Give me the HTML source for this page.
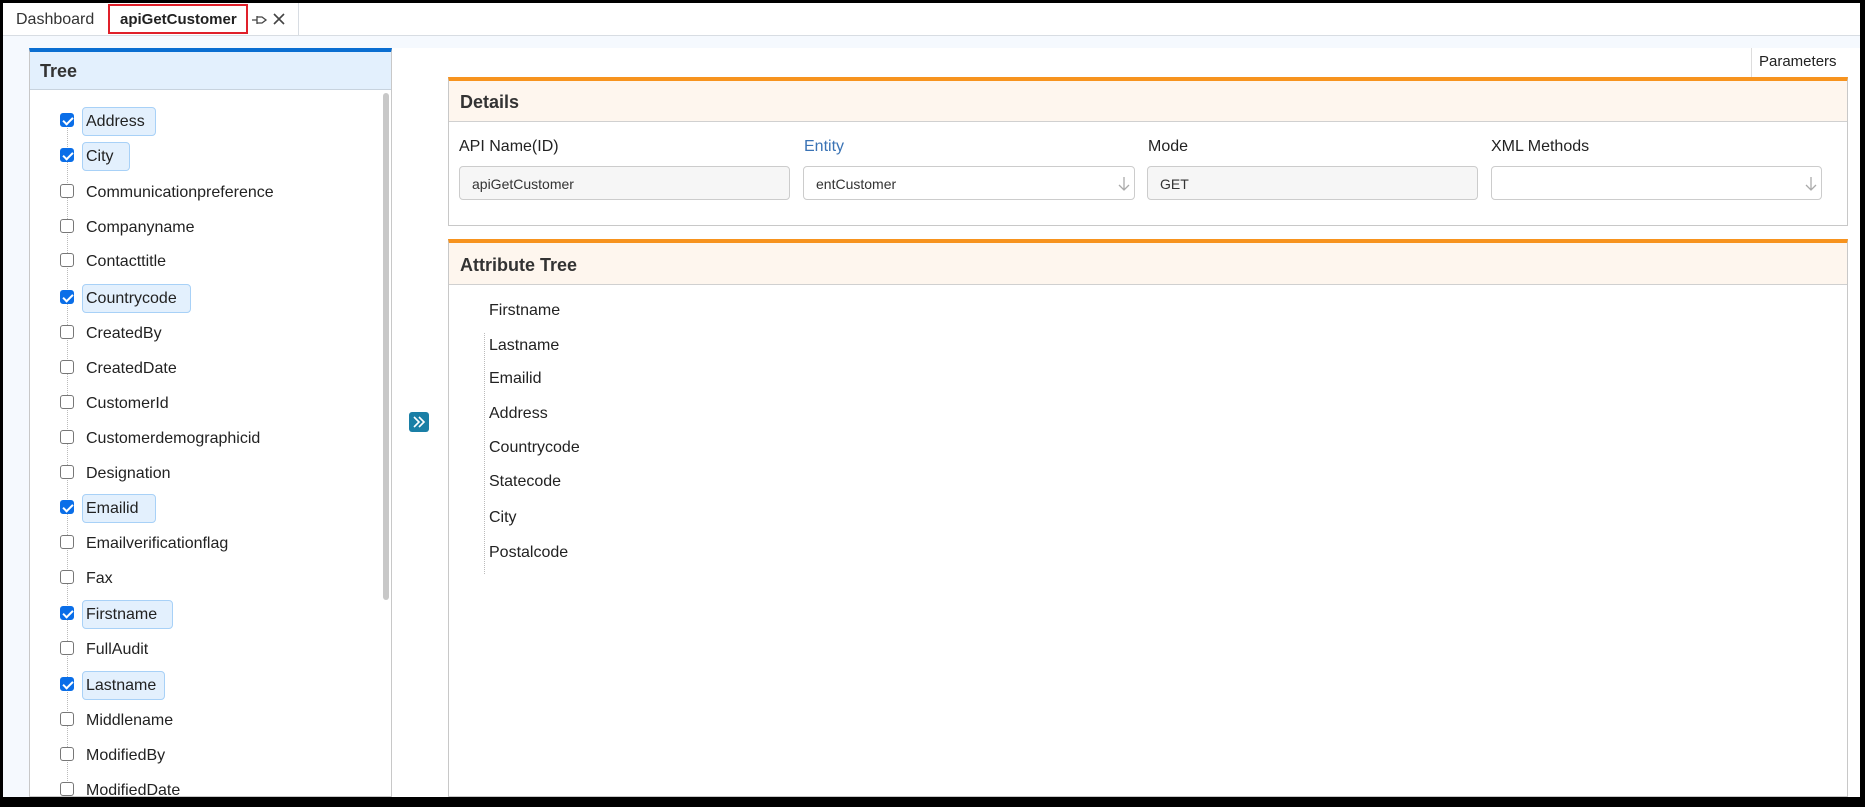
<!DOCTYPE html>
<html><head><meta charset="utf-8"><style>
*{box-sizing:border-box;margin:0;padding:0}
body{width:1865px;height:807px;overflow:hidden;background:#000;font-family:"Liberation Sans",sans-serif;color:#222;position:relative}
.frame{position:absolute;left:3px;top:3px;width:1857px;height:794px;background:#f5f9fe}
.abs{position:absolute}
.tabbar{position:absolute;left:0;top:0;width:1857px;height:33px;background:#fff;border-bottom:1px solid #d8dde3}
.t{position:absolute;font-size:16px;white-space:nowrap;line-height:18px}
.cb{position:absolute;width:14px;height:14px;border:1.5px solid #777;border-radius:3px;background:#fff}
.cb.on{background:#0a6ee8;border-color:#0a6ee8}
.cb.on:after{content:"";position:absolute;left:3.5px;top:0.5px;width:4px;height:8px;border:solid #fff;border-width:0 2px 2px 0;transform:rotate(45deg)}
.hl{position:absolute;height:29px;background:#e3f0fd;border:1px solid #a8d1f7;border-radius:4px}
.panelhead{position:absolute;font-size:18px;font-weight:bold;color:#333}
.inp{position:absolute;height:34px;border:1px solid #ccc;border-radius:4px;font-size:14px;padding:9px 12px;color:#333}
</style></head><body>
<div class="frame">
 <div class="tabbar">
  <div class="t" style="left:13px;top:8px;color:#333">Dashboard</div>
  <div class="abs" style="left:105px;top:1px;width:140px;height:30px;border:2px solid #e0202a"></div>
  <div class="t" style="left:117px;top:8px;color:#222;font-weight:bold;font-size:15px">apiGetCustomer</div>
  <svg class="abs" style="left:248px;top:10px" width="18" height="14" viewBox="0 0 18 14"><path d="M1 7H6M6 3V11M6 4H11L15 7L11 10H6" fill="none" stroke="#444" stroke-width="1.3"/></svg>
  <svg class="abs" style="left:269px;top:9px" width="14" height="14" viewBox="0 0 14 14"><path d="M2 2L12 12M12 2L2 12" stroke="#444" stroke-width="1.6"/></svg>
  <div class="abs" style="left:295px;top:0;width:1px;height:33px;background:#d8dde3"></div>
 </div>
 <div class="abs" style="left:388px;top:45px;width:1469px;height:749px;background:#fff"></div>
 <div class="abs" style="left:26px;top:45px;width:363px;height:749px;background:#fff;border:1px solid #c8c8c8;border-top:4px solid #0a6ed1"></div>
 <div class="abs" style="left:27px;top:49px;width:361px;height:38px;background:#e3f0fd;border-bottom:1px solid #c8d3de"></div>
 <div class="panelhead" style="left:37px;top:58px">Tree</div>
 <div class="abs" style="left:380px;top:90px;width:6px;height:507px;background:#c8c8c8;border-radius:3px"></div>
 <div class="abs" style="left:64px;top:125px;width:0;height:665px;border-left:1px dotted #bbb"></div>
 <div id="tree"></div>
 <div class="abs" style="left:406px;top:409px;width:20px;height:20px;background:#1a7fa6;border-radius:3px"></div>
 <svg class="abs" style="left:406px;top:409px" width="20" height="20" viewBox="0 0 20 20"><path d="M5 5L10 10L5 15M10 5L15 10L10 15" fill="none" stroke="#fff" stroke-width="1.6"/></svg>
 <div class="abs" style="left:1748px;top:45px;width:1px;height:29px;background:#ddd"></div>
 <div class="t" style="left:1756px;top:50px;font-size:15px;color:#222">Parameters</div>
 <div class="abs" style="left:445px;top:74px;width:1400px;height:149px;border:1px solid #c8c8c8;border-top:4px solid #f7931e"></div>
 <div class="abs" style="left:446px;top:78px;width:1398px;height:41px;background:#fef6ee;border-bottom:1px solid #d0d0d0"></div>
 <div class="panelhead" style="left:457px;top:89px">Details</div>
 <div class="t" style="left:456px;top:135px">API Name(ID)</div>
 <div class="t" style="left:801px;top:135px;color:#3a73b5">Entity</div>
 <div class="t" style="left:1145px;top:135px">Mode</div>
 <div class="t" style="left:1488px;top:135px">XML Methods</div>
 <div class="inp" style="left:456px;top:163px;width:331px;background:#f6f6f6">apiGetCustomer</div>
 <div class="inp" style="left:800px;top:163px;width:332px;background:#fff">entCustomer</div>
 <div class="inp" style="left:1144px;top:163px;width:331px;background:#f6f6f6">GET</div>
 <div class="inp" style="left:1488px;top:163px;width:331px;background:#fff"></div>
 <svg class="abs" style="left:1115px;top:173px" width="12" height="16" viewBox="0 0 12 16"><path d="M6 1V14M1 9L6 14L11 9" fill="none" stroke="#aaa" stroke-width="1.3"/></svg>
 <svg class="abs" style="left:1802px;top:173px" width="12" height="16" viewBox="0 0 12 16"><path d="M6 1V14M1 9L6 14L11 9" fill="none" stroke="#aaa" stroke-width="1.3"/></svg>
 <div class="abs" style="left:445px;top:236px;width:1400px;height:558px;border:1px solid #c8c8c8;border-top:4px solid #f7931e"></div>
 <div class="abs" style="left:446px;top:240px;width:1398px;height:42px;background:#fef6ee;border-bottom:1px solid #d0d0d0"></div>
 <div class="panelhead" style="left:457px;top:252px">Attribute Tree</div>
 <div class="abs" style="left:481px;top:330px;width:0;height:241px;border-left:1px dotted #bbb"></div>
 <div id="attr"></div>
</div>
<script>
var items=[["Address",1],["City",1],["Communicationpreference",0],["Companyname",0],["Contacttitle",0],["Countrycode",1],["CreatedBy",0],["CreatedDate",0],["CustomerId",0],["Customerdemographicid",0],["Designation",0],["Emailid",1],["Emailverificationflag",0],["Fax",0],["Firstname",1],["FullAudit",0],["Lastname",1],["Middlename",0],["ModifiedBy",0],["ModifiedDate",0]];
var ys=[116,151,187,222,256,293,328,363,398,433,468,503,538,573,609,644,680,715,750,785];
var h="";
items.forEach(function(it,i){var y=ys[i];
 if(it[1]){var w=it[0].length*8.6+14;h+='<div class="hl" style="left:79px;top:'+(y-12)+'px;width:'+w+'px"></div>';}
 h+='<div class="cb'+(it[1]?' on':'')+'" style="left:57px;top:'+(y-6)+'px"></div>';
 h+='<div class="t" style="left:83px;top:'+(y-6)+'px">'+it[0]+'</div>';});
document.getElementById('tree').outerHTML=h;
var a=["Firstname","Lastname","Emailid","Address","Countrycode","Statecode","City","Postalcode"];
var ay=[306,341,374,409,443,477,513,548];h="";
a.forEach(function(s,i){h+='<div class="t" style="left:486px;top:'+(ay[i]-7)+'px">'+s+'</div>';});
document.getElementById('attr').outerHTML=h;
</script>
</body></html>
